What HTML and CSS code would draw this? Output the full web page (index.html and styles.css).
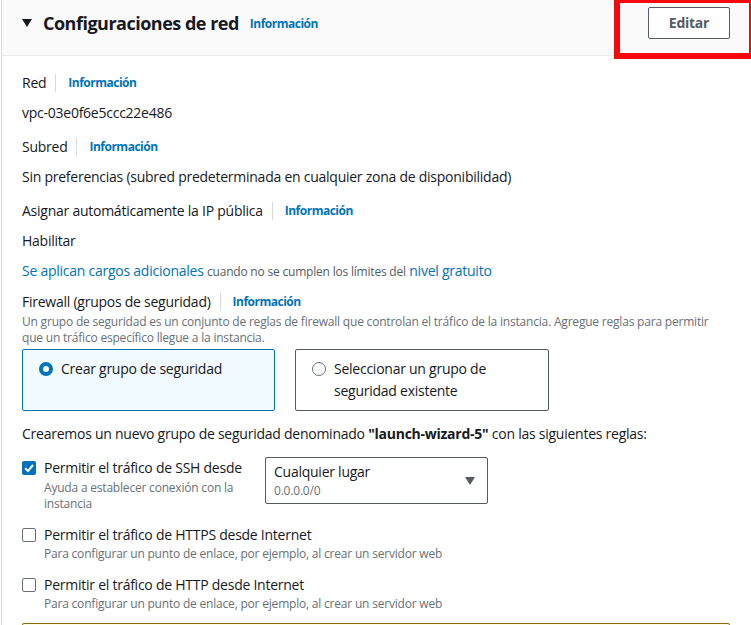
FILE: index.html
```html
<!DOCTYPE html>
<html lang="es">
<head>
<meta charset="utf-8">
<link rel="stylesheet" href="styles.css">
</head>
<body>
<div class="panel">
  <div class="header">
    <span class="caret"></span>
    <h2 class="title">Configuraciones de red</h2>
    <a class="info info-title">Información</a>
    <button class="btn">Editar</button>
  </div>
  <div class="highlight"></div>
  <div class="content">
    <div class="label lbl-first"><span>Red</span><span class="sep"></span><a class="info">Información</a></div>
    <div class="value">vpc-03e0f6e5ccc22e486</div>

    <div class="label"><span>Subred</span><span class="sep"></span><a class="info">Información</a></div>
    <div class="value">Sin preferencias (subred predeterminada en cualquier zona de disponibilidad)</div>

    <div class="label"><span>Asignar automáticamente la IP pública</span><span class="sep"></span><a class="info">Información</a></div>
    <div class="value">Habilitar</div>

    <div class="value charges"><a class="link">Se aplican cargos adicionales</a> <span class="small">cuando no se cumplen los límites del</span> <a class="link">nivel gratuito</a></div>

    <div class="label fw"><span>Firewall (grupos de seguridad)</span><span class="sep"></span><a class="info">Información</a></div>
    <div class="desc">Un grupo de seguridad es un conjunto de reglas de firewall que controlan el tráfico de la instancia. Agregue reglas para permitir que un tráfico específico llegue a la instancia.</div>

    <div class="tiles">
      <div class="tile selected"><span class="radio on"></span><span class="tile-text">Crear grupo de seguridad</span></div>
      <div class="tile"><span class="radio"></span><span class="tile-text">Seleccionar un grupo de seguridad existente</span></div>
    </div>

    <div class="value create">Crearemos un nuevo grupo de seguridad denominado <b>"launch-wizard-5"</b> con las siguientes reglas:</div>

    <div class="rule ssh">
      <div class="rule-main">
        <span class="check on"><svg viewBox="0 0 14 14" width="14" height="14"><path d="M3.2 7.2 L6 10 L11 4" fill="none" stroke="#fff" stroke-width="2"/></svg></span>
        <div class="rule-text">
          <div class="rule-label">Permitir el tráfico de SSH desde</div>
          <div class="rule-desc">Ayuda a establecer conexión con la instancia</div>
        </div>
      </div>
      <div class="select">
        <div class="sel-text">
          <div class="sel-main">Cualquier lugar</div>
          <div class="sel-sub">0.0.0.0/0</div>
        </div>
        <span class="sel-caret"></span>
      </div>
    </div>

    <div class="rule">
      <div class="rule-main">
        <span class="check"></span>
        <div class="rule-text">
          <div class="rule-label">Permitir el tráfico de HTTPS desde Internet</div>
          <div class="rule-desc">Para configurar un punto de enlace, por ejemplo, al crear un servidor web</div>
        </div>
      </div>
    </div>

    <div class="rule">
      <div class="rule-main">
        <span class="check"></span>
        <div class="rule-text">
          <div class="rule-label">Permitir el tráfico de HTTP desde Internet</div>
          <div class="rule-desc">Para configurar un punto de enlace, por ejemplo, al crear un servidor web</div>
        </div>
      </div>
    </div>

    <div class="warning"></div>
  </div>
</div>
</body>
</html>
```
FILE: styles.css
```css
* { box-sizing: border-box; }
html, body { margin: 0; padding: 0; background: #fff; }
body {
  font-family: "Open Sans", "Noto Sans", sans-serif;
  font-size: 14px;
  letter-spacing: -0.25px;
  color: #16191f;
  overflow: hidden;
  height: 625px;
}
.panel {
  position: relative;
  margin-left: 1px;
  border-left: 1px solid #d5dbdb;
  min-height: 625px;
}
.header {
  height: 56px;
  background: #fafafa;
  border-bottom: 1px solid #eaeded;
  display: flex;
  align-items: center;
  padding: 0 21px 0 20px;
}
.caret {
  width: 0; height: 0;
  border-left: 5px solid transparent;
  border-right: 5px solid transparent;
  border-top: 8px solid #16191f;
  margin-right: 11px;
  margin-top: -10px;
}
.title {
  margin: 0;
  font-size: 18px;
  font-weight: 700;
  letter-spacing: -0.5px;
  line-height: 22px;
  margin-top: -10px;
}
.info {
  color: #0073bb;
  font-size: 12px;
  font-weight: 700;
  letter-spacing: -0.5px;
}
.info-title { margin-left: 11px; margin-top: -8px; }
.btn {
  margin-left: auto;
  margin-top: -10px;
  width: 82px;
  height: 32px;
  background: #fff;
  border: 1px solid #545b64;
  border-radius: 2px;
  color: #545b64;
  font-family: inherit;
  font-weight: 700;
  font-size: 14px;
  letter-spacing: -0.25px;
}
.highlight {
  position: absolute;
  left: 612px;
  top: -3px;
  width: 140px;
  height: 62px;
  border: 6px solid #f40a0a;
  border-right-width: 5px;
}
.content { padding: 0 20px 0 20px; }
.label {
  display: flex;
  align-items: center;
  line-height: 22px;
  margin-top: 12px;
}
.lbl-first { margin-top: 16px; }
.sep {
  width: 1px;
  height: 18px;
  background: #d5dbdb;
  margin: 0 12px 0 9px;
}
.value { line-height: 22px; margin-top: 8px; }
.link { color: #0073bb; }
.small { font-size: 12px; color: #545b64; letter-spacing: -0.2px; }
.fw { margin-top: 8px; }
.desc {
  font-size: 12px;
  line-height: 16px;
  color: #687078;
  letter-spacing: -0.2px;
  margin-top: 1px;
}
.tiles {
  display: flex;
  gap: 20px;
  margin-top: 3px;
}
.tile {
  width: 254px;
  min-height: 62px;
  border: 1px solid #545b64;
  border-radius: 2px;
  padding: 8px 16px;
  display: flex;
  align-items: flex-start;
  line-height: 22px;
}
.tile.selected {
  background: #f1faff;
  border-color: #0073bb;
  width: 253px;
}
.radio {
  flex: none;
  width: 14px; height: 14px;
  border-radius: 50%;
  border: 1px solid #687078;
  margin-top: 4px;
  margin-right: 8px;
}
.radio.on { border: 4px solid #0073bb; background: #fff; }
.create { margin-top: 12px; }
.rule {
  display: flex;
  gap: 13px;
  margin-top: 12px;
}
.rule.ssh { margin-top: 12px; }
.rule-main {
  display: flex;
  align-items: flex-start;
}
.ssh .rule-main { width: 230px; }
.check {
  flex: none;
  width: 14px; height: 14px;
  border: 1px solid #687078;
  border-radius: 2px;
  margin-top: 4px;
  margin-right: 8px;
  display: flex;
}
.check.on { background: #0073bb; border: none; }
.rule-label { line-height: 22px; }
.rule-desc {
  font-size: 12px;
  line-height: 16px;
  color: #687078;
  letter-spacing: -0.2px;
}
.ssh .rule-desc { padding-right: 10px; margin-top: 1px; }
.select {
  width: 223px;
  height: 47px;
  border: 1px solid #545b64;
  border-radius: 2px;
  display: flex;
  align-items: center;
  padding: 0 12px 0 8px;
}
.sel-text { flex: 1; }
.sel-main { line-height: 20px; }
.sel-sub { font-size: 12px; line-height: 16px; color: #687078; margin-top: 1px; letter-spacing: -0.2px; }
.sel-caret {
  width: 0; height: 0;
  border-left: 5px solid transparent;
  border-right: 5px solid transparent;
  border-top: 8px solid #545b64;
}
.warning {
  margin-top: 11px;
  width: 708px;
  height: 40px;
  border: 1px solid #8d6605;
  border-radius: 2px;
  background: #fffce6;
}
```
